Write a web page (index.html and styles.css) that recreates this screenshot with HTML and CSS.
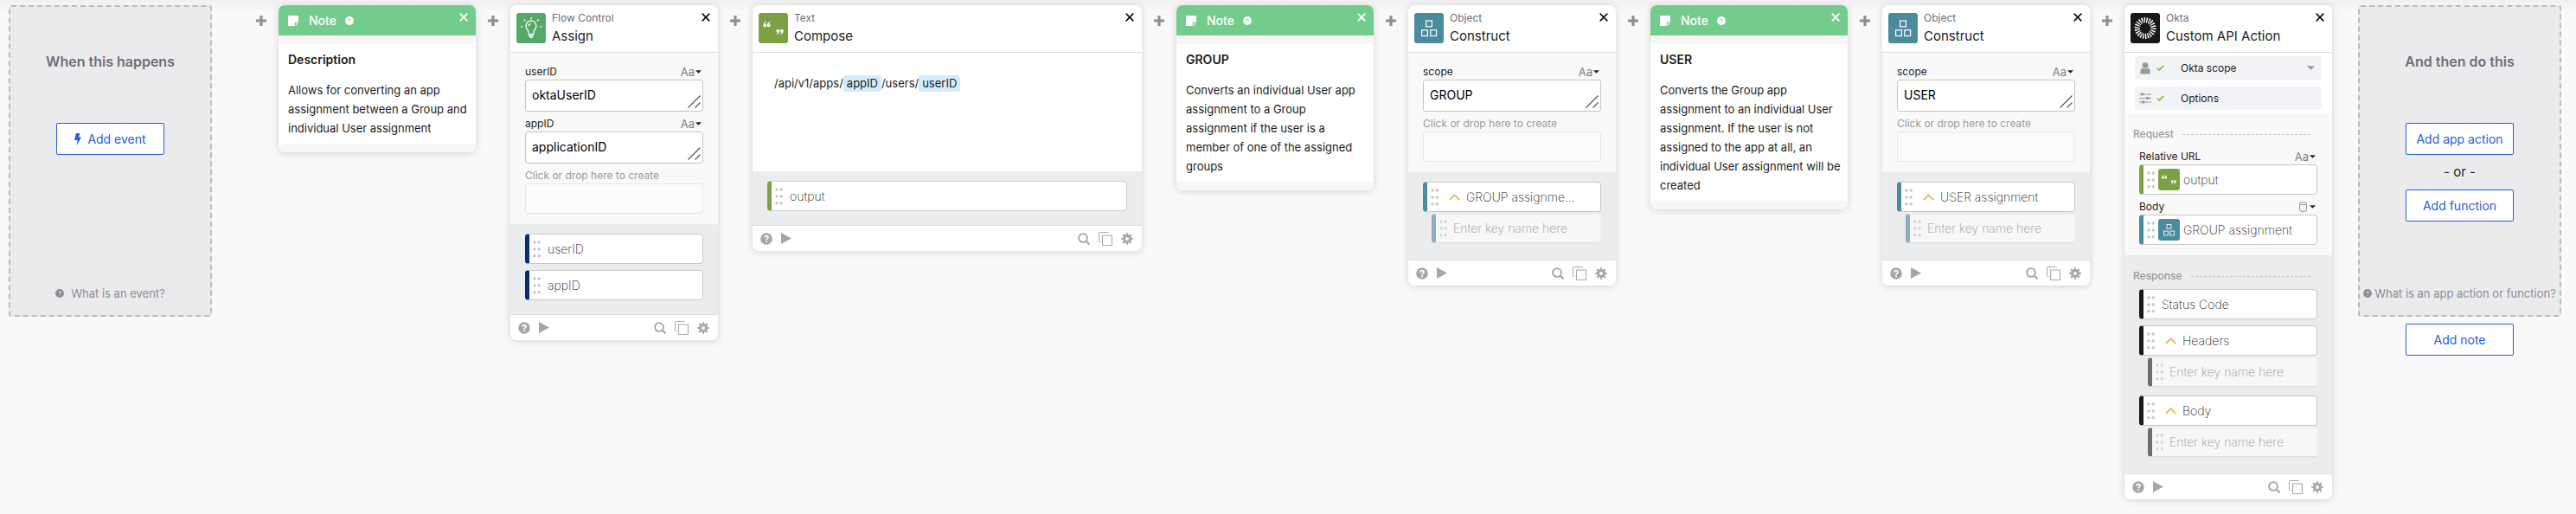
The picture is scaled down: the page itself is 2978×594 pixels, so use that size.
FILE: index.html
```html
<!DOCTYPE html>
<html lang="en">
<head>
<meta charset="utf-8">
<meta name="viewport" content="width=device-width, initial-scale=1">
<title>Flow editor</title>
<link rel="stylesheet" href="styles.css">
</head>
<body>
<svg class="sprite" aria-hidden="true">
  <symbol id="i-plus" viewBox="0 0 12 12"><path d="M6 0v12M0 6h12" stroke="currentColor" stroke-width="3.2"/></symbol>
  <symbol id="i-close" viewBox="0 0 10 10"><path d="M0.7 0.7l8.6 8.6M9.3 0.7L0.7 9.3" stroke="currentColor" stroke-width="1.7"/></symbol>
  <symbol id="i-badge" viewBox="0 0 10 10"><circle cx="5" cy="5" r="4.9" fill="currentColor" stroke="none"/><path d="M3.9 3.9q0.1-1.1 1.2-1.1t1.1 1q0 0.7-1.1 1.2v0.6M5.1 6.6v1" fill="none" stroke-width="0.9"/></symbol>
  <symbol id="i-note" viewBox="0 0 12 12"><path d="M0 0h12v7.5H7.8V12H0z" fill="currentColor"/><path d="M9 8.8h2.8L9 11.8z" fill="currentColor"/></symbol>
  <symbol id="i-bolt" viewBox="0 0 8 14"><path d="M2 0h4.3L5 4.4h3L2.8 14l0.8-6H0z" fill="currentColor"/></symbol>
  <symbol id="i-tri" viewBox="0 0 8 4"><path d="M0 0h8L4 4z" fill="currentColor"/></symbol>
  <symbol id="i-grip" viewBox="0 0 15 15"><path d="M0.5 14.5l14-14M8.5 14.5l6-6" stroke="currentColor" stroke-width="1.2"/></symbol>
  <symbol id="i-dots" viewBox="0 0 9 20"><g fill="currentColor"><circle cx="1.9" cy="2" r="1.7"/><circle cx="7.2" cy="2" r="1.7"/><circle cx="1.9" cy="9.9" r="1.7"/><circle cx="7.2" cy="9.9" r="1.7"/><circle cx="1.9" cy="17.7" r="1.7"/><circle cx="7.2" cy="17.7" r="1.7"/></g></symbol>
  <symbol id="i-up" viewBox="0 0 13 8"><path d="M0.7 7.2L6.5 1.3l5.8 5.9" fill="none" stroke="currentColor" stroke-width="1.8"/></symbol>
  <symbol id="i-help" viewBox="0 0 14 14"><circle cx="7" cy="7" r="6.8" fill="currentColor"/><path d="M4.9 5.5Q5 3.6 7 3.6t2 1.7Q9 6.3 7.9 6.9 7 7.4 7 8.3M7 9.3v1.8" fill="none" stroke="#fff" stroke-width="1.7"/></symbol>
  <symbol id="i-play" viewBox="0 0 12 13"><path d="M0 0l12 6.5L0 13z" fill="currentColor"/></symbol>
  <symbol id="i-search" viewBox="0 0 14 14"><circle cx="6" cy="6" r="4.9" fill="none" stroke="currentColor" stroke-width="1.9"/><path d="M9.5 9.5l4 4" stroke="currentColor" stroke-width="2.2"/></symbol>
  <symbol id="i-copy" viewBox="0 0 16 16"><path d="M2.5 11.5h-1a1 1 0 0 1-1-1v-9a1 1 0 0 1 1-1h9a1 1 0 0 1 1 1" fill="none" stroke="currentColor"/><rect x="4.500" y="4" width="11" height="11.500" rx="0.800" fill="none" stroke="currentColor" stroke-width="1.100"/></symbol>
  <symbol id="i-gear" viewBox="0 0 14 14"><circle cx="7" cy="7" r="3.500" fill="none" stroke="currentColor" stroke-width="3"/><circle cx="7" cy="7" r="5.800" fill="none" stroke="currentColor" stroke-width="2" pathLength="16" stroke-dasharray="1 1" stroke-dashoffset="0.500"/></symbol>
  <symbol id="i-bulb" viewBox="0 0 34 35"><g fill="none" stroke="#fff" stroke-width="1.300"><path d="M14 23.500v-1.500q0-1.300-1.400-2.900A6 6 0 1 1 21.400 19Q20 20.700 20 22v1.500"/><path d="M13.500 24.500h7M14 26.500h6M15.300 28.300h3.400M13.800 15.500q0.300-2.400 2.700-3"/><path d="M17.200 5v2.500M8.800 7.500l1.500 2M25.600 7.500l-1.500 2M5 15.800h2.300M27.200 15.800h2.300"/></g></symbol>
  <symbol id="i-quotes" viewBox="0 0 34 35"><g fill="#fff"><path d="M9 9.800Q5.300 11 5.300 14.400a1.900 1.900 0 1 0 1.800-1.900Q7.400 11.400 9 10.500z"/><path d="M13.500 9.800Q9.800 11 9.800 14.400a1.900 1.900 0 1 0 1.800-1.900Q11.900 11.400 13.500 10.500z"/><path d="M20.500 25.200Q24.200 24 24.200 20.600a1.900 1.900 0 1 0-1.800 1.900Q22.100 23.600 20.500 24.500z"/><path d="M25 25.200Q28.700 24 28.700 20.600a1.900 1.900 0 1 0-1.800 1.900Q26.600 23.600 25 24.500z"/></g></symbol>
  <symbol id="i-boxes" viewBox="0 0 34 35"><g fill="none" stroke="#fff" stroke-width="1.200"><rect x="13.600" y="9" width="6.800" height="6.800"/><rect x="8.600" y="19.700" width="6.800" height="6.800"/><rect x="18.800" y="19.700" width="6.800" height="6.800"/></g></symbol>
  <symbol id="i-burst" viewBox="0 0 34 35"><circle cx="17" cy="17.500" r="9.300" fill="none" stroke="#fff" stroke-width="6.200" pathLength="44" stroke-dasharray="1 1"/></symbol>
  <symbol id="i-user" viewBox="0 0 12 14"><circle cx="6" cy="3.600" r="3.400" fill="currentColor"/><path d="M0.500 13.500V10q0-3 2.500-3.300Q6 8.700 9 6.700q2.500 0.300 2.500 3.300v3.500z" fill="currentColor"/></symbol>
  <symbol id="i-sliders" viewBox="0 0 14 13"><g stroke="currentColor"><path d="M0 2h14M0 6.500h14M0 11h14" stroke-width="1"/><path d="M3.700 0.500v3M9.700 5v3M4.700 9.500v3" stroke-width="3"/></g></symbol>
  <symbol id="i-check" viewBox="0 0 9 7"><path d="M0.800 3.600l2.400 2.400L8.300 0.900" fill="none" stroke="currentColor" stroke-width="1.800"/></symbol>
  <symbol id="i-db" viewBox="0 0 9 12"><path d="M0.600 2.200v7.600Q0.600 11.400 4.500 11.400T8.400 9.800V2.200M0.600 2.200Q0.600 0.600 4.500 0.600T8.400 2.200 4.500 3.700 0.600 2.200z" fill="none" stroke="currentColor"/></symbol>
</svg>

<main class="flow">
  <section class="stage stage-start">
    <div class="drop">
      <h2 class="drop-title">When this happens</h2>
      <div class="drop-actions"><button class="btn"><svg class="bolt"><use href="#i-bolt"/></svg>Add event</button></div>
      <a class="hint wide" href="#"><svg class="badge"><use href="#i-badge"/></svg>What is an event?</a>
    </div>
  </section>

  <button class="add" aria-label="Add step"><svg><use href="#i-plus"/></svg></button>

  <article class="card note">
    <header class="note-head"><svg class="note-icon"><use href="#i-note"/></svg><span>Note</span><svg class="badge"><use href="#i-badge"/></svg><button class="close" aria-label="Close"><svg><use href="#i-close"/></svg></button></header>
    <div class="note-body"><h3>Description</h3><p>Allows for converting an app assignment between a Group and individual User assignment</p></div>
  </article>

  <button class="add" aria-label="Add step"><svg><use href="#i-plus"/></svg></button>

  <article class="card navy">
    <header class="head"><svg class="app green"><use href="#i-bulb"/></svg><div><p class="kind">Flow Control</p><h3 class="name">Assign</h3></div><button class="close" aria-label="Close"><svg><use href="#i-close"/></svg></button></header>
    <div class="inputs">
      <div class="field">
        <div class="label"><label for="a1">userID</label><button class="type" aria-haspopup="listbox">Aa<svg><use href="#i-tri"/></svg></button></div>
        <div class="box"><textarea id="a1" rows="1">oktaUserID</textarea><svg class="grip"><use href="#i-grip"/></svg></div>
      </div>
      <div class="field">
        <div class="label"><label for="a2">appID</label><button class="type" aria-haspopup="listbox">Aa<svg><use href="#i-tri"/></svg></button></div>
        <div class="box"><textarea id="a2" rows="1">applicationID</textarea><svg class="grip"><use href="#i-grip"/></svg></div>
      </div>
      <div class="field empty">
        <div class="label"><label for="a3">Click or drop here to create</label></div>
        <input id="a3" type="text">
      </div>
    </div>
    <div class="outputs">
      <div class="chip"><svg class="dots"><use href="#i-dots"/></svg><span>userID</span></div>
      <div class="chip"><svg class="dots"><use href="#i-dots"/></svg><span>appID</span></div>
    </div>
    <footer class="foot"><button aria-label="Help"><svg class="s14"><use href="#i-help"/></svg></button><button aria-label="Run"><svg class="play"><use href="#i-play"/></svg></button><span class="spacer"></span><button aria-label="Search"><svg class="s14"><use href="#i-search"/></svg></button><button aria-label="Duplicate"><svg class="s16"><use href="#i-copy"/></svg></button><button aria-label="Settings"><svg class="s14"><use href="#i-gear"/></svg></button></footer>
  </article>

  <button class="add" aria-label="Add step"><svg><use href="#i-plus"/></svg></button>

  <article class="card large olive">
    <header class="head"><svg class="app olive-bg"><use href="#i-quotes"/></svg><div><p class="kind">Text</p><h3 class="name">Compose</h3></div><button class="close" aria-label="Close"><svg><use href="#i-close"/></svg></button></header>
    <div class="compose"><p>/api/v1/apps/<span class="token">appID</span>/users/<span class="token">userID</span></p></div>
    <div class="outputs">
      <div class="chip"><svg class="dots"><use href="#i-dots"/></svg><span>output</span></div>
    </div>
    <footer class="foot"><button aria-label="Help"><svg class="s14"><use href="#i-help"/></svg></button><button aria-label="Run"><svg class="play"><use href="#i-play"/></svg></button><span class="spacer"></span><button aria-label="Search"><svg class="s14"><use href="#i-search"/></svg></button><button aria-label="Duplicate"><svg class="s16"><use href="#i-copy"/></svg></button><button aria-label="Settings"><svg class="s14"><use href="#i-gear"/></svg></button></footer>
  </article>

  <button class="add" aria-label="Add step"><svg><use href="#i-plus"/></svg></button>

  <article class="card note">
    <header class="note-head"><svg class="note-icon"><use href="#i-note"/></svg><span>Note</span><svg class="badge"><use href="#i-badge"/></svg><button class="close" aria-label="Close"><svg><use href="#i-close"/></svg></button></header>
    <div class="note-body"><h3>GROUP</h3><p>Converts an individual User app assignment to a Group assignment if the user is a member of one of the assigned groups</p></div>
  </article>

  <button class="add" aria-label="Add step"><svg><use href="#i-plus"/></svg></button>

  <article class="card teal">
    <header class="head"><svg class="app teal-bg"><use href="#i-boxes"/></svg><div><p class="kind">Object</p><h3 class="name">Construct</h3></div><button class="close" aria-label="Close"><svg><use href="#i-close"/></svg></button></header>
    <div class="inputs">
      <div class="field">
        <div class="label"><label for="b1">scope</label><button class="type" aria-haspopup="listbox">Aa<svg><use href="#i-tri"/></svg></button></div>
        <div class="box"><textarea id="b1" rows="1">GROUP</textarea><svg class="grip"><use href="#i-grip"/></svg></div>
      </div>
      <div class="field empty">
        <div class="label"><label for="b2">Click or drop here to create</label></div>
        <input id="b2" type="text">
      </div>
    </div>
    <div class="outputs">
      <div class="group">
        <div class="chip"><svg class="dots"><use href="#i-dots"/></svg><svg class="up"><use href="#i-up"/></svg><span>GROUP assignme...</span></div>
        <div class="chip child"><svg class="dots"><use href="#i-dots"/></svg><input type="text" aria-label="Key name" placeholder="Enter key name here"></div>
      </div>
    </div>
    <footer class="foot"><button aria-label="Help"><svg class="s14"><use href="#i-help"/></svg></button><button aria-label="Run"><svg class="play"><use href="#i-play"/></svg></button><span class="spacer"></span><button aria-label="Search"><svg class="s14"><use href="#i-search"/></svg></button><button aria-label="Duplicate"><svg class="s16"><use href="#i-copy"/></svg></button><button aria-label="Settings"><svg class="s14"><use href="#i-gear"/></svg></button></footer>
  </article>

  <button class="add" aria-label="Add step"><svg><use href="#i-plus"/></svg></button>

  <article class="card note">
    <header class="note-head"><svg class="note-icon"><use href="#i-note"/></svg><span>Note</span><svg class="badge"><use href="#i-badge"/></svg><button class="close" aria-label="Close"><svg><use href="#i-close"/></svg></button></header>
    <div class="note-body"><h3>USER</h3><p>Converts the Group app assignment to an individual User assignment. If the user is not assigned to the app at all, an individual User assignment will be created</p></div>
  </article>

  <button class="add" aria-label="Add step"><svg><use href="#i-plus"/></svg></button>

  <article class="card teal">
    <header class="head"><svg class="app teal-bg"><use href="#i-boxes"/></svg><div><p class="kind">Object</p><h3 class="name">Construct</h3></div><button class="close" aria-label="Close"><svg><use href="#i-close"/></svg></button></header>
    <div class="inputs">
      <div class="field">
        <div class="label"><label for="c1">scope</label><button class="type" aria-haspopup="listbox">Aa<svg><use href="#i-tri"/></svg></button></div>
        <div class="box"><textarea id="c1" rows="1">USER</textarea><svg class="grip"><use href="#i-grip"/></svg></div>
      </div>
      <div class="field empty">
        <div class="label"><label for="c2">Click or drop here to create</label></div>
        <input id="c2" type="text">
      </div>
    </div>
    <div class="outputs">
      <div class="group">
        <div class="chip"><svg class="dots"><use href="#i-dots"/></svg><svg class="up"><use href="#i-up"/></svg><span>USER assignment</span></div>
        <div class="chip child"><svg class="dots"><use href="#i-dots"/></svg><input type="text" aria-label="Key name" placeholder="Enter key name here"></div>
      </div>
    </div>
    <footer class="foot"><button aria-label="Help"><svg class="s14"><use href="#i-help"/></svg></button><button aria-label="Run"><svg class="play"><use href="#i-play"/></svg></button><span class="spacer"></span><button aria-label="Search"><svg class="s14"><use href="#i-search"/></svg></button><button aria-label="Duplicate"><svg class="s16"><use href="#i-copy"/></svg></button><button aria-label="Settings"><svg class="s14"><use href="#i-gear"/></svg></button></footer>
  </article>

  <button class="add" aria-label="Add step"><svg><use href="#i-plus"/></svg></button>

  <article class="card ink">
    <header class="head"><svg class="app ink-bg"><use href="#i-burst"/></svg><div><p class="kind">Okta</p><h3 class="name">Custom API Action</h3></div><button class="close" aria-label="Close"><svg><use href="#i-close"/></svg></button></header>
    <div class="settings">
      <button class="setting" aria-haspopup="listbox"><svg class="lead user"><use href="#i-user"/></svg><svg class="check"><use href="#i-check"/></svg><span>Okta scope</span><svg class="arrow"><use href="#i-tri"/></svg></button>
      <button class="setting"><svg class="lead"><use href="#i-sliders"/></svg><svg class="check"><use href="#i-check"/></svg><span>Options</span></button>
    </div>
    <div class="inputs">
      <h4 class="divider">Request</h4>
      <div class="field">
        <div class="label"><span>Relative URL</span><button class="type" aria-haspopup="listbox">Aa<svg><use href="#i-tri"/></svg></button></div>
        <div class="chip olive"><svg class="dots"><use href="#i-dots"/></svg><svg class="mini olive-bg"><use href="#i-quotes"/></svg><span>output</span></div>
      </div>
      <div class="field">
        <div class="label"><span>Body</span><button class="type" aria-haspopup="listbox" aria-label="Object type"><svg class="db"><use href="#i-db"/></svg><svg><use href="#i-tri"/></svg></button></div>
        <div class="chip teal"><svg class="dots"><use href="#i-dots"/></svg><svg class="mini teal-bg"><use href="#i-boxes"/></svg><span>GROUP assignment</span></div>
      </div>
    </div>
    <div class="outputs">
      <h4 class="divider">Response</h4>
      <div class="chip"><svg class="dots"><use href="#i-dots"/></svg><span>Status Code</span></div>
      <div class="group">
        <div class="chip"><svg class="dots"><use href="#i-dots"/></svg><svg class="up"><use href="#i-up"/></svg><span>Headers</span></div>
        <div class="chip child"><svg class="dots"><use href="#i-dots"/></svg><input type="text" aria-label="Header key name" placeholder="Enter key name here"></div>
      </div>
      <div class="group">
        <div class="chip"><svg class="dots"><use href="#i-dots"/></svg><svg class="up"><use href="#i-up"/></svg><span>Body</span></div>
        <div class="chip child"><svg class="dots"><use href="#i-dots"/></svg><input type="text" aria-label="Body key name" placeholder="Enter key name here"></div>
      </div>
    </div>
    <footer class="foot"><button aria-label="Help"><svg class="s14"><use href="#i-help"/></svg></button><button aria-label="Run"><svg class="play"><use href="#i-play"/></svg></button><span class="spacer"></span><button aria-label="Search"><svg class="s14"><use href="#i-search"/></svg></button><button aria-label="Duplicate"><svg class="s16"><use href="#i-copy"/></svg></button><button aria-label="Settings"><svg class="s14"><use href="#i-gear"/></svg></button></footer>
  </article>

  <section class="stage stage-end">
    <div class="drop">
      <h2 class="drop-title">And then do this</h2>
      <div class="drop-actions"><button class="btn">Add app action</button><span class="or">- or -</span><button class="btn">Add function</button></div>
      <a class="hint" href="#"><svg class="badge"><use href="#i-badge"/></svg>What is an app action or function?</a>
    </div>
    <button class="btn">Add note</button>
  </section>
</main>
</body>
</html>
```
FILE: styles.css
```css
* { box-sizing: border-box; }

body {
  margin: 0;
  min-height: 100vh;
  background: #f9f9f9 linear-gradient(#f1f1f1, #f9f9f9) no-repeat 0 0 / 100% 14px;
  color: #1d1d21;
  font-family: Inter, "Liberation Sans", sans-serif;
  font-size: 13px;
  line-height: 20px;
}

h2, h3, h4, p { margin: 0; font-weight: 400; }
svg { display: block; flex: none; }
button, input, textarea { font: inherit; color: inherit; }
button { border: 0; padding: 0; background: none; cursor: pointer; }
.sprite { position: absolute; width: 0; height: 0; }

.flow { display: flex; align-items: flex-start; min-width: max-content; padding: 6px 17px 16px 10px; }

/* Start and end stages */
.stage { flex: 1 0 235px; width: 235px; display: flex; flex-direction: column; align-items: center; gap: 8px; }
.stage-start { margin-right: 37px; }
.stage-end { margin-left: 30px; }
.drop {
  display: flex; flex-direction: column; align-items: center;
  width: 100%; min-height: 360px; padding: 52px 0 15px;
  border: 2px dashed #bbb; border-radius: 3px; background: #ebebed;
}
.drop-title { color: #6e6e78; font-size: 16px; font-weight: 600; line-height: 22px; }
.drop-actions { display: flex; flex-direction: column; align-items: center; margin-top: 60px; }
.or { font-size: 15px; line-height: 40px; }
.btn {
  display: flex; align-items: center; justify-content: center; gap: 7px;
  width: 125px; height: 37px; border: 1px solid #2a5bd7; border-radius: 2px;
  background: #fff; color: #2a5bd7; font-size: 14px;
}
.bolt { width: 8px; height: 14px; }
.hint { display: flex; align-items: center; gap: 3px; margin-top: auto; color: #8c8c96; text-decoration: none; white-space: nowrap; }
.hint.wide { gap: 8px; }
.badge { width: 10px; height: 10px; stroke: #ebebed; }

.add { display: flex; justify-content: center; flex: none; width: 40px; padding: 12px 0; color: #8e8e8e; }
.add svg { width: 12px; height: 12px; }

/* Cards */
.card {
  position: relative; flex: 1 0 240px; width: 240px; overflow: hidden;
  border-radius: 7px; background: #fff; box-shadow: 0 1px 9px rgba(0, 0, 0, .16);
}
.card.large { flex-basis: 450px; width: 450px; }
.card.note { flex-basis: 228px; width: 228px; background: #f7f7f7; }
.navy { --bar: #0b2a7c; --bar-soft: #8594bd; }
.olive { --bar: #7ea044; --bar-soft: #bed0a1; }
.teal { --bar: #4a8b9e; --bar-soft: #8bb1be; }
.ink { --bar: #17191b; --bar-soft: #6e6e6e; }

.close { margin-left: auto; align-self: flex-start; color: #111; }
.close svg { width: 10px; height: 10px; }

.note-head { display: flex; align-items: center; height: 35px; padding: 9px 9px 8px 11px; background: #74cc8c; color: #fff; font-size: 14px; font-weight: 500; }
.note-head .badge { margin-left: 10px; stroke: #74cc8c; }
.note-head .close { color: #fff; }
.note-icon { width: 12px; height: 12px; margin-right: 12px; }
.note-body { margin: 10px 0; padding: 8px 6px 7px 11px; background: #fff; }
.note-body h3 { margin-bottom: 14px; font-size: 14px; font-weight: 600; }
.note-body p { line-height: 22px; }

.head { display: flex; height: 55px; padding: 9px 9px 0 7px; border-bottom: 1px solid #ddd; }
.app { width: 34px; height: 35px; margin-right: 7px; border-radius: 3px; }
.green { background: #55a868; }
.olive-bg { background: #7ea044; }
.teal-bg { background: #4a8b9e; }
.ink-bg { background: #17191b; }
.kind { color: #6e6e78; font-size: 12px; line-height: 12px; }
.name { font-size: 15px; line-height: 30px; }

.inputs { display: flex; flex-direction: column; gap: 5px; padding: 13px 17px 12px; background: #f9f9f9; }
.label { display: flex; justify-content: space-between; height: 18px; padding-right: 2px; font-size: 12px; line-height: 18px; }
.type { display: flex; align-items: center; gap: 1px; height: 18px; color: #7b7f88; font-size: 13px; }
.type svg { width: 7px; height: 4px; color: #222; }
.type .db { width: 9px; height: 12px; margin-right: 2px; color: #8a8e96; }
.box { position: relative; height: 37px; border: 1px solid #c4c4c4; border-radius: 3px; background: #fff; }
.box textarea {
  display: block; width: 100%; height: 35px; padding: 7px; border: 0; outline: 0; resize: none; overflow: hidden;
  background: none; color: #000; font-size: 14px; line-height: 20px;
}
.grip { position: absolute; right: 2px; bottom: 3px; width: 15px; height: 15px; color: #555; }
.empty { color: #999; }
.empty input { display: block; width: 100%; height: 35px; border: 1px solid #e6e6e6; border-radius: 3px; background: #fbfbfb; }

.compose { min-height: 137px; padding: 25px; }
.token { display: inline-block; height: 19px; padding: 0 4px; border-radius: 3px; background: #d3ecfb; line-height: 19px; }

.outputs { display: flex; flex-direction: column; gap: 7px; padding: 11px 17px 16px; background: #ebecee; }
.group { padding-bottom: 3px; }
.chip {
  display: flex; align-items: center; height: 35px; padding-left: 4px;
  border: 1px solid #c8c8c8; border-left: 5px solid var(--bar); border-radius: 4px;
  background: #fff; color: #222; font-size: 14px; font-weight: 200; white-space: nowrap;
}
.dots { width: 9px; height: 20px; margin-right: 8px; color: #c4c4c4; }
.up { width: 13px; height: 8px; margin: 0 7px 0 4px; color: #f2b35c; }
.mini { width: 25px; height: 25px; margin: 0 4px 0 -4px; border-radius: 3px; }
.child { height: 34px; margin: 2px 0 0 10px; border-color: #f1f1f1 #f1f1f1 #ddd var(--bar-soft); background: #f7f7f7; }
.child .dots { color: #d4d4d4; margin-right: 7px; }
.child input { flex: 1; min-width: 0; padding: 0; border: 0; outline: 0; background: none; }
.child input::placeholder { color: #999; opacity: 1; }

.divider { display: flex; align-items: center; gap: 10px; margin: 1px 8px 2px -7px; color: #999; font-size: 12px; font-weight: 500; }
.divider::after { content: ""; flex: 1; border-top: 1px dashed #c4c4c4; }
.outputs .divider { margin: 3px 8px -2px -7px; }

.settings { display: flex; flex-direction: column; gap: 8px; padding: 4px 12px; }
.setting { display: flex; align-items: center; height: 27px; padding: 0 8px 0 5px; border-radius: 3px; background: #f2f3f7; font-size: 12px; text-align: left; }
.lead { width: 14px; height: 13px; margin-right: 6px; color: #999; }
.lead.user { height: 14px; }
.check { width: 9px; height: 7px; margin-right: 19px; color: #8bc34a; }
.arrow { width: 9px; height: 5px; margin-left: auto; color: #999; }

.foot { display: flex; align-items: center; gap: 10px; height: 30px; padding: 0 10px 0 9px; border-top: 1px solid #ddd; color: #a6a6a6; }
.spacer { flex: 1; }
.s14 { width: 14px; height: 14px; }
.s16 { width: 16px; height: 16px; }
.play { width: 12px; height: 13px; }
```
